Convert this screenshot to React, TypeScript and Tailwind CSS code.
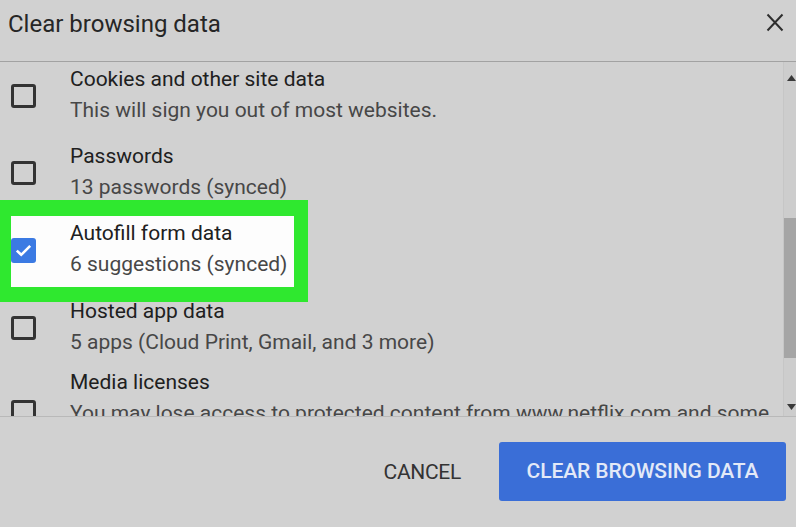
import React from "react";

type Row = { title: string; sub: string; h: string; checked?: boolean };

const rows: Row[] = [
  { title: "Cookies and other site data", sub: "This will sign you out of most websites.", h: "h-[76.5px]" },
  { title: "Passwords", sub: "13 passwords (synced)", h: "h-[77px]" },
  { title: "Autofill form data", sub: "6 suggestions (synced)", h: "h-[78px]", checked: true },
  { title: "Hosted app data", sub: "5 apps (Cloud Print, Gmail, and 3 more)", h: "h-[71.5px]" },
];

const Box = ({ checked }: { checked?: boolean }) =>
  checked ? (
    <span className="flex h-[25px] w-[25px] items-center justify-center rounded-[3px] bg-[#3b7ae3]">
      <svg width="17" height="13" viewBox="0 0 17 13" fill="none">
        <path d="M1.8 6.6 6.2 10.8 15.2 1.8" stroke="#fff" strokeWidth="2.6" />
      </svg>
    </span>
  ) : (
    <span className="block h-[24px] w-[25px] rounded-[3px] border-[3px] border-[#333]" />
  );

export default function App() {
  return (
    <div className="flex h-[527px] w-[796px] flex-col bg-[#d1d1d1] font-['Roboto',sans-serif]">
      {/* header */}
      <div className="flex h-[62px] shrink-0 items-start justify-between border-b border-[#a2a2a2]">
        <h1 className="pl-[8px] pt-[10px] text-[24px] leading-[28px] text-[#262626]">Clear browsing data</h1>
        <button className="mr-[12px] mt-[13px]">
          <svg width="18" height="19" viewBox="0 0 18 19" fill="none">
            <path d="M1.5 1.5 16.5 17.5M16.5 1.5 1.5 17.5" stroke="#2e2e2e" strokeWidth="2" />
          </svg>
        </button>
      </div>

      {/* scrolling list */}
      <div className="flex h-[355px] shrink-0 border-b border-[#b9b9b9]">
        <div className="flex-1 overflow-hidden pt-[2px]">
          {rows.map((r) => (
            <div key={r.title} className={`relative flex items-start ${r.h}`}>
              {r.checked && (
                <div className="absolute left-0 top-[-17.5px] h-[102px] w-[308px] border-b-[15px] border-l-[11px] border-r-[14px] border-t-[16px] border-[#2fe82f] bg-[#fdfdfd]" />
              )}
              <div className="relative w-[70px] shrink-0 pl-[11px] pt-[20px]">
                <Box checked={r.checked} />
              </div>
              <div className="relative text-[21px] leading-[31px]">
                <div className="text-[#202020]">{r.title}</div>
                <div className="text-[#474747]">{r.sub}</div>
              </div>
            </div>
          ))}
          <div className="flex items-start">
            <div className="w-[70px] shrink-0 pl-[11px] pt-[33px]">
              <Box />
            </div>
            <div className="pr-[4px] text-[21px] leading-[31px]">
              <div className="text-[#202020]">Media licenses</div>
              <div className="text-[#474747]">
                You may lose access to protected content from www.netflix.com and some other sites.
              </div>
            </div>
          </div>
        </div>
        {/* scrollbar */}
        <div className="flex w-[13px] shrink-0 flex-col border-l border-[#c6c6c6] bg-[#cdcdcd]">
          <div className="flex h-[22px] items-end justify-end pb-[3px]">
            <svg width="9" height="6" viewBox="0 0 9 6">
              <path d="M4.5 0 9 6H0Z" fill="#3a3a3a" />
            </svg>
          </div>
          <div className="h-[134px]" />
          <div className="h-[140px] bg-[#a5a5a5]" />
          <div className="flex flex-1 items-end justify-end pb-[6px]">
            <svg width="9" height="6" viewBox="0 0 9 6">
              <path d="M0 0H9L4.5 6Z" fill="#3a3a3a" />
            </svg>
          </div>
        </div>
      </div>

      {/* footer */}
      <div className="flex flex-1 items-start justify-end pr-[10px] pt-[25px]">
        <button className="mr-[38px] mt-[16px] text-[21px] leading-[28px] tracking-[-0.3px] text-[#333]">CANCEL</button>
        <button className="h-[59px] w-[287px] rounded-[3px] bg-[#3a6ed7] text-[21px] font-medium tracking-[-0.1px] text-[#e3e9f7]">
          CLEAR BROWSING DATA
        </button>
      </div>
    </div>
  );
}
